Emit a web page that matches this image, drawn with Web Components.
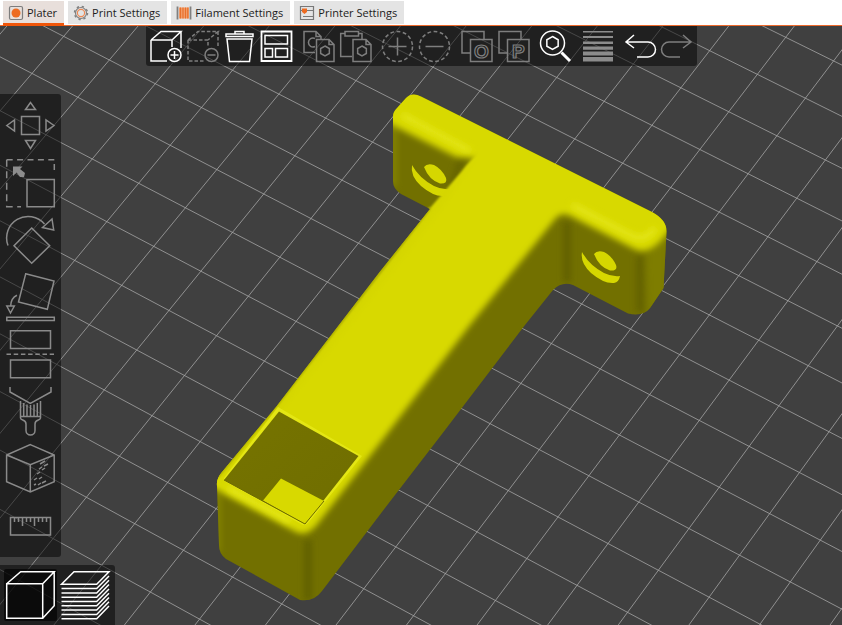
<!DOCTYPE html>
<html lang="en">
<head>
<meta charset="utf-8">
<title>Plater</title>
<style>
html, body { margin: 0; height: 100%; }
body { font-family: "Open Sans", "Noto Sans", sans-serif; font-size: 11px; background: #404040; overflow: hidden; }
</style>
</head>
<body>
<slicer-app>
  <app-tab slot="tab" icon="plater" selected>Plater</app-tab>
  <app-tab slot="tab" icon="gear">Print Settings</app-tab>
  <app-tab slot="tab" icon="spool">Filament Settings</app-tab>
  <app-tab slot="tab" icon="printer">Printer Settings</app-tab>

  <bed-scene slot="scene"></bed-scene>

  <tool-bar slot="top" label="Objects">
    <tool-group><tool-button icon="add" label="Add" on></tool-button><tool-button icon="remove" label="Delete"></tool-button><tool-button icon="trash" label="Delete all" on></tool-button><tool-button icon="arrange" label="Arrange" on></tool-button></tool-group>
    <tool-group><tool-button icon="copy" label="Copy"></tool-button><tool-button icon="paste" label="Paste"></tool-button></tool-group>
    <tool-group><tool-button icon="plus" label="Add instance"></tool-button><tool-button icon="minus" label="Remove instance"></tool-button></tool-group>
    <tool-group><tool-button icon="splitO" label="Split to objects"></tool-button><tool-button icon="splitP" label="Split to parts"></tool-button></tool-group>
    <tool-group><tool-button icon="search" label="Search" on></tool-button></tool-group>
    <tool-group><tool-button icon="heights" label="Variable layer height"></tool-button></tool-group>
    <tool-group><tool-button icon="undo" label="Undo" on></tool-button><tool-button icon="redo" label="Redo"></tool-button></tool-group>
  </tool-bar>

  <tool-bar slot="side" label="Gizmos" vertical>
    <tool-button large icon="move" label="Move"></tool-button>
    <tool-button large icon="scale" label="Scale"></tool-button>
    <tool-button large icon="rotate" label="Rotate"></tool-button>
    <tool-button large icon="face" label="Place on face"></tool-button>
    <tool-button large icon="cut" label="Cut"></tool-button>
    <tool-button large icon="paint" label="Paint-on supports"></tool-button>
    <tool-button large icon="seam" label="Seam painting"></tool-button>
    <tool-button large icon="measure" label="Measure"></tool-button>
  </tool-bar>

  <tool-bar slot="views" label="View" views>
    <tool-button large icon="solid" label="3D editor view" on pressed></tool-button>
    <tool-button large icon="sliced" label="Preview" on></tool-button>
  </tool-bar>
</slicer-app>

<script>
const dashedCube = '<path d="M1 10H21V17M1 10V31H17M1 10L11 1.500H31L21 10M31 1.500V18"/>';
const hex = (x, y, r) => `<path d="M${x} ${y - r}l${r * .87} ${r / 2}v${r}l${-r * .87} ${r / 2}l${-r * .87} ${-r / 2}v${-r}z"/>`;
const undoPath = '<path d="M10 5L2 12L10 18M2 12H24a7.500 7.500 0 0 1 0 15H13"/>';
const split = ch => `<path d="M9 23H1V1.500H23V9.500M9.500 9.500H31V31.500H9.500z"/><text x="20.300" y="27.500" text-anchor="middle" font-family="Liberation Sans Narrow, Liberation Sans, sans-serif" font-weight="bold" font-size="19" stroke-width="1.200">${ch}</text>`;
const layers = () => {
  let d = 'M.5 13.300L13 .7H48L35.700 13.300z';
  for (let k = 1; k < 9; k++) { const y = 13.3 + 4.3 * k; d += `M.5 ${y}H35.700L48 ${y - 12.6}`; }
  return `<path d="${d}"/>`;
};
const ICONS = {
  plater: '<rect x="1.500" y="1.500" width="13" height="13" rx="1.500" stroke="#7d7d7d"/><circle cx="8" cy="8" r="4.500" fill="#ed6b21" stroke="none"/>',
  gear: '<circle cx="8" cy="8" r="5.500" stroke="#808080"/><circle cx="8" cy="8" r="6.500" stroke="#808080" stroke-width="1.500" stroke-dasharray="2.300 2.800"/><circle cx="8" cy="8" r="3.600" stroke="#ed8a55"/>',
  spool: '<path d="M1.500 1.500V14.500M14.500 1.500V14.500" stroke="#808080" stroke-width="1.800"/><rect x="3" y="2.500" width="10" height="11" fill="#f3a06f" stroke="none"/><path d="M4.500 2.500V13.500M7 2.500V13.500M9.500 2.500V13.500M11.800 2.500V13.500" stroke="#e8702a"/>',
  printer: '<path d="M1.500 1.500H14.500V14.500H1.500zM1.500 5.500H14.500M4 11.500H14" stroke="#787878"/><path d="M3 3.500H8V7L5.500 9L3 7z" fill="#ed6b21" stroke="none"/>',
  add: '<path d="M1 10H22V17M1 10V31H17M1 10L11 1.500H31L22 10M31 1.500V18"/><circle cx="24.500" cy="25" r="6.500"/><path d="M20.500 25h8M24.500 21v8"/>',
  remove: `<g stroke-dasharray="3.500 2">${dashedCube}</g><circle cx="24.500" cy="25" r="6.500"/><path d="M20.500 25h8"/>`,
  trash: '<path d="M11 3.500V1.500H20V3.500M2 4H29V6.500H2zM3 9H28L25.500 31.500H5.500z"/>',
  arrange: '<path d="M.5 1.500H30.500V31H.5z" stroke-width="1.800"/><path d="M4 5.500H26.500V14H4zM4 18.500H11.500V27H4zM14.500 18.500H26.500V27H14.500z"/>',
  copy: '<path d="M12 22.500H1V1.500H13L18 6.500V9M13 1.500V6.500H18M13.500 9.500H26L31 14.500V31.500H13.500zM26 9.500V14.500H31"/><path d="M12 8.500A4.500 4.500 0 1 0 12 16.500"/>' + hex(22, 21, 5),
  paste: '<path d="M4.500 3.500H.7V26.500H12M19 3.500H22V9M5 1.500H18.500V6H5zM13 9.500H26L31 14.500V31.500H13zM26 9.500V14.500H31"/>' + hex(22, 21, 5),
  plus: '<circle cx="15.500" cy="16.500" r="15" stroke-dasharray="3.800 2.500"/><path d="M6.500 16.500h18M15.500 7.500v18"/>',
  minus: '<circle cx="15.500" cy="16.500" r="15" stroke-dasharray="3.800 2.500"/><path d="M6.500 16.500h18"/>',
  splitO: split('O'),
  splitP: split('P'),
  search: '<circle cx="12.500" cy="13" r="12"/>' + hex(12.5, 13, 6.5) + '<path d="M21.500 22.500L30 31" stroke-width="3"/>',
  heights: '<path stroke="none" fill="#8c8c8c" d="M1 1h30v1.500H1zM1 6h30v2H1zM1 11.500h30v2.500H1zM1 16.500h30v3.200H1zM1 21.500h30v4H1zM1 27h30v4.500H1z"/>',
  undo: undoPath,
  redo: `<g transform="matrix(-1 0 0 1 32 0)">${undoPath}</g>`,
  move: '<path d="M15.500 14.500H33.500V32.500H15.500zM24.500 .5L19.500 7.500H29.500zM24.500 46.500L19.500 38.500H29.500zM.8 23.500L8.500 18V29zM48 23.500L40 18V29z"/>',
  scale: '<path stroke-dasharray="6 4.400" d="M.7 .7H48.300V14"/><path stroke-dasharray="7 4.500" d="M.7 .7V47.700H15"/><path d="M21 20.500H48.300V47.700H21z"/><path stroke="none" fill="#8c8c8c" d="M7 7.500H16.500L14 10L19 14L18 18H14L10.500 13.500L7 17z"/>',
  rotate: '<path d="M2 29.500A21.500 21.500 0 0 1 38.500 8M46 3L36.500 11.500L47.700 14zM25.700 12L43.700 29.700L25.700 47.300L8 29.700z"/>',
  face: '<path d="M19.700 .8L48 8L41.300 36.300L12.500 29zM11 22.300Q5 25 4.700 33M.8 33H8.300L4.500 40zM.8 44.200H48.300V47.500H.8z"/>',
  cut: '<path d="M4.500 .8H44.500V18.500H4.500zM4.500 30H44.500V47.700H4.500z"/><path stroke-dasharray="4.500 2.700" d="M.5 24.300H48"/>',
  paint: '<path d="M4 0V5L24.300 16.500L45 5V0M14.500 14V31C14.500 34 20 32 20 37V43.500A4.300 4.300 0 0 0 29 43.500V37C29 32 34.500 34 34.500 31V14M14.500 29.500H34.500M17.700 16V29M21 17.500V29M24.500 18V29M28 17.500V29M31.300 16V29"/>',
  seam: '<path d="M24.300 .6L48.200 11V37.800L24.300 48L.6 37.800V11zM.6 11L24.300 20.800L48.200 11M24.300 20.800V48"/><path d="M34 20l5-3M38 22l4-2M33 25l3-2M31 30l3-2M36 26l3-2M28 36l3-2M33 35l3-2M32 41l3-2M36 39l4-2M28 41l2-1"/>',
  measure: '<path d="M4.500 16.500H44.500V34H4.500zM8.500 16V21M12.500 16V21M16.500 16V25M20.500 16V21M24.500 16V21M28.500 16V25M32.500 16V21M36.500 16V21M40.500 16V21"/>',
  solid: '<path d="M.7 12.700H36.700V47.300H.7zM.7 12.700L14.700 .7H48.200L36.700 12.700M48.200 .7V34.700L36.700 47.300"/>',
  sliced: layers(),
};

class SlicerApp extends HTMLElement {
  constructor() {
    super();
    this.attachShadow({ mode: 'open' }).innerHTML = `
      <style>
        :host { display: flex; flex-direction: column; height: 100vh; }
        nav { display: flex; gap: 4px; padding: 1px 3px 0; height: 24px; background: #fff; border-bottom: 1px solid #ee6a2c; }
        main { flex: 1; min-height: 0; display: grid; grid-template: auto 1fr auto / auto 1fr; }
        .scene { grid-area: 1 / 1 / -1 / -1; min-height: 0; overflow: hidden; }
        .top { grid-area: 1 / 1 / 2 / -1; justify-self: center; }
        .side { grid-area: 1 / 1 / -1 / 2; place-self: center start; }
        .views { grid-area: 3 / 1 / 4 / -1; place-self: end start; }
        .top, .side, .views { z-index: 1; }
      </style>
      <nav role="tablist"><slot name="tab"></slot></nav>
      <main>
        <div class="scene"><slot name="scene"></slot></div>
        <div class="top"><slot name="top"></slot></div>
        <div class="side"><slot name="side"></slot></div>
        <div class="views"><slot name="views"></slot></div>
      </main>`;
  }
}

class AppTab extends HTMLElement {
  constructor() {
    super();
    const sel = this.hasAttribute('selected');
    this.attachShadow({ mode: 'open' }).innerHTML = `
      <style>
        :host { display: flex; height: 23px; z-index: 1; }
        :host([selected]) { height: 25px; }
        button { display: flex; align-items: center; gap: 3px; padding: 0 7px 0 5px; border: 0; background: #e4e4e4; color: #1c1c1c; font: inherit; white-space: nowrap; }
        :host([selected]) button { background: #e8dfdb; border-bottom: 3px solid #f0560a; padding-top: 1px; }
        svg { width: 16px; height: 16px; fill: none; stroke-width: 1.2; }
      </style>
      <button type="button" role="tab" aria-selected="${sel}"><svg viewBox="0 0 16 16" aria-hidden="true">${ICONS[this.getAttribute('icon')]}</svg><slot></slot></button>`;
  }
}

class ToolBar extends HTMLElement {
  constructor() {
    super();
    this.attachShadow({ mode: 'open' }).innerHTML = `
      <style>
        :host { display: block; background: rgba(0, 0, 0, .5); border-radius: 0 0 3px 3px; }
        div { display: flex; gap: 10px; padding: 4px; }
        :host([vertical]) { border-radius: 0 3px 3px 0; }
        :host([vertical]) div { flex-direction: column; gap: 9px; padding: 8px 6px; }
        :host([views]) { border-radius: 0 3px 0 0; }
        :host([views]) div { gap: 2px; padding: 4px 3px 4px 4px; }
      </style>
      <div role="toolbar" aria-label="${this.getAttribute('label')}"><slot></slot></div>`;
  }
}

class ToolGroup extends HTMLElement {
  constructor() {
    super();
    this.attachShadow({ mode: 'open' }).innerHTML = `<style>:host { display: flex; gap: 5px; }</style><slot></slot>`;
  }
}

class ToolButton extends HTMLElement {
  constructor() {
    super();
    const n = this.hasAttribute('large') ? 49 : 32;
    this.attachShadow({ mode: 'open' }).innerHTML = `
      <style>
        :host { display: block; color: #7e7e7e; }
        :host([large]) { color: #8a8a8a; }
        :host([on]) { color: #fff; }
        button { display: block; padding: 0; border: 0; background: none; color: inherit; }
        svg { display: block; width: 32px; height: 32px; fill: none; stroke: currentColor; stroke-width: 1.5; overflow: visible; }
        :host([large]) svg { width: 49px; height: 48px; }
        :host([large][on]) button { padding: 2px; border-radius: 2px; }
        :host([pressed]) button { background: rgba(0, 0, 0, .65); }
      </style>
      <button type="button" aria-label="${this.getAttribute('label')}"><svg viewBox="0 0 ${n} ${n === 49 ? 48 : 32}" aria-hidden="true">${ICONS[this.getAttribute('icon')]}</svg></button>`;
  }
}

/* Print bed grid in perspective, with the bracket standing on it. */
class BedScene extends HTMLElement {
  constructor() {
    super();
    const at = (i, j) => {
      const w = 1 - .003 * i - .00455 * j;
      return `${((45.49 * i - 31.85 * j + 109.3) / w).toFixed(1)} ${((23.485 * i + 36.78 * j + 60) / w).toFixed(1)}`;
    };
    let grid = '';
    for (let i = -10; i <= 24; i++) grid += `M${at(i, -16)}L${at(i, 18)}`;
    for (let j = -16; j <= 18; j++) grid += `M${at(-10, j)}L${at(24, j)}`;
    const outline = 'M421 96.500L652 212Q667 220 666.500 232L663.500 288L650 308Q643 317 628 313.500L573 285Q562 281 553 290L525 325L442 434L385 508L322 591Q314 602 300 600L226 559Q219 554 219 545L217 486Q216 479 222 472L276 407L380 271.500L430 209L401 194Q393 189 393 181V116Q393 112 397 108L406 98Q412 92 421 96.500Z';
    const screw = '<path d="M582 252Q580 263 591 273Q604 284 614 283Q619 282 620 276Q612 277 604 273Q589 265 582 252Z"/><path d="M594 254Q597 250 604 252Q612 256 616 265Q618 271 610 270.500Q599 267 594 254Z"/>';
    this.attachShadow({ mode: 'open' }).innerHTML = `
      <style>
        :host { display: block; width: 100%; height: 100%; background: #404040; }
        svg { display: block; width: 100%; height: 100%; }
      </style>
      <svg viewBox="0 26 842 599" preserveAspectRatio="xMidYMid slice" role="img" aria-label="Bracket on the print bed">
        <defs>
          <clipPath id="body"><path d="${outline}"/></clipPath>
          <filter id="b1" x="-20%" y="-20%" width="140%" height="140%"><feGaussianBlur stdDeviation="1"/></filter>
          <filter id="b3" filterUnits="userSpaceOnUse" x="150" y="40" width="600" height="600"><feGaussianBlur stdDeviation="3"/></filter>
          <linearGradient id="inner" x1="0" y1="0" x2="1" y2="1"><stop offset="0" stop-color="#767400"/><stop offset="1" stop-color="#6f6d00"/></linearGradient>
        </defs>
        <path d="${grid}" fill="none" stroke="#a4a4a4" stroke-width=".8"/>
        <path d="${outline}" fill="#727000"/>
        <g clip-path="url(#body)">
          <g filter="url(#b3)" fill="none">
            <path d="M645 235L668 215V300L648 316Z" fill="#7e7d00"/>
            <path d="M640 256V312" stroke="#626100" stroke-width="7"/>
            <path d="M567 222V282" stroke="#605f00" stroke-width="7"/>
            <path d="M308 540V600" stroke="#5f5e00" stroke-width="7"/>
            <path d="M218 492V552" stroke="#8c8b00" stroke-width="4"/>
            <path d="M394 125V186" stroke="#8c8b00" stroke-width="4"/>
            <path d="M462 160L452 190" stroke="#656400" stroke-width="8"/>
          </g>
          <g fill="#d6d700" stroke="none"><g transform="translate(-170 -87)">${screw}</g>${screw}</g>
          <path filter="url(#b1)" fill="#d5d600" d="M480 153Q470 160 462 171L430 208L276 406L222 471L212 482L290 522L360 455L540 220Z"/>
          <path filter="url(#b3)" fill="#d8d900" d="M400 80L690 205L668 232Q650 257 634 249L574 218Q562 210 555 219L470 325L380 443L316 526Q305 538 294 531L205 484L228 470L284 406L440 210L475 158L456 157L396 127L380 120Z"/>
          <g filter="url(#b3)" fill="none" stroke="#e6e81a" stroke-width="5">
            <path d="M572 205L630 235Q645 243 655 228"/>
            <path d="M402 115L470 151"/>
            <path d="M228 488L290 521"/>
          </g>
          <path filter="url(#b1)" d="M430 208L276 406L218 477" fill="none" stroke="#b6b700" stroke-width="2.500"/>
          <path d="M278 407L225 476.500Q222 480 226 482L302 524.500Q306 526 309 522L362 456Z" fill="#e4e614"/>
          <path d="M279 411.500L358.500 456L305 524L224 480Z" fill="url(#inner)"/>
          <path d="M281 478.500L324 501L305 524L263 500.500Z" fill="#d8d900"/>
          <path d="M224 480L305 524L324 501" fill="none" stroke="#6c6a00"/>
        </g>
      </svg>`;
  }
}

customElements.define('slicer-app', SlicerApp);
customElements.define('app-tab', AppTab);
customElements.define('tool-bar', ToolBar);
customElements.define('tool-group', ToolGroup);
customElements.define('tool-button', ToolButton);
customElements.define('bed-scene', BedScene);
</script>
</body>
</html>
